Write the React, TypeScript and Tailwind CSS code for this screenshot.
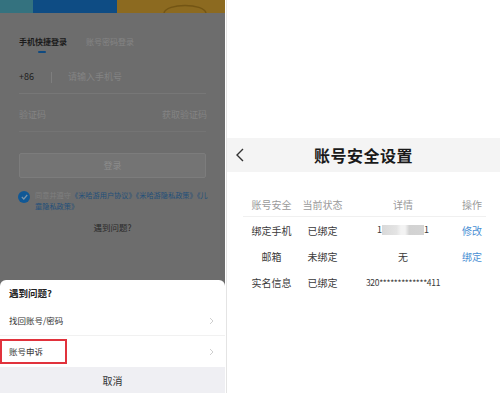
import React from "react";

const F = "font-['Noto_Sans_CJK_SC','Noto_Sans',sans-serif]";

function Chevron({ className }: { className?: string }) {
  return (
    <svg width="5" height="8" viewBox="0 0 5 8" className={className}>
      <path d="M1 1 L4 4 L1 7" fill="none" stroke="#cfcfcf" strokeWidth="1" />
    </svg>
  );
}

function LeftPanel() {
  return (
    <div className={`relative w-[225px] h-[393px] bg-[#6d6d6d] overflow-hidden ${F}`}>
      {/* banner */}
      <div className="flex h-[13px]">
        <div className="w-[33px] bg-[#34727f]" />
        <div className="w-[84px] bg-[#0e4c84]" />
        <div className="relative flex-1 bg-[#8c6a20]">
          <svg className="absolute left-[45px] top-0" width="46" height="13" viewBox="0 0 46 13">
            <path d="M2 13 C4 3 42 3 44 13" fill="none" stroke="#735514" strokeWidth="1.5" />
          </svg>
        </div>
      </div>

      <div className="px-[19px]">
        {/* tabs */}
        <div className="mt-[23px] flex items-center gap-[19px] h-[12px] text-[8px] leading-[12px]">
          <span className="text-[#1b1b1b] font-semibold">手机快捷登录</span>
          <span className="text-[#858585]">账号密码登录</span>
        </div>
        <div className="ml-[19px] mt-[3px] w-[8px] h-[2px] rounded bg-[#0f4a80]" />

        {/* phone */}
        <div className="mt-[18px] flex items-center h-[12px] text-[9px] leading-[12px]">
          <span className="text-[#1e1e1e] w-[32px]">+86</span>
          <span className="w-px h-[11px] bg-[#7e7e7e]" />
          <span className="ml-[16px] text-[#848484]">请输入手机号</span>
        </div>
        <div className="mt-[10px] h-px bg-[#777777]" />

        {/* code */}
        <div className="mt-[15px] flex items-center justify-between h-[12px] text-[9px] leading-[12px]">
          <span className="text-[#848484]">验证码</span>
          <span className="text-[#848484] mr-[-1px]">获取验证码</span>
        </div>
        <div className="mt-[10px] h-px bg-[#747474]" />

        {/* login button */}
        <div className="mt-[21px] h-[25px] rounded-[2px] bg-[#747474] border border-[#7c7c7c] flex items-center justify-center text-[9px] text-[#8d8d8d]">
          登录
        </div>

        {/* agreement */}
        <div className="mt-[12px] flex items-start gap-[5px] ml-[-1px]">
          <div className="mt-[1px] w-[12px] h-[12px] shrink-0 rounded-full bg-[#105896] flex items-center justify-center">
            <svg width="7" height="6" viewBox="0 0 7 6">
              <path d="M0.8 3 L2.8 5 L6.2 1" fill="none" stroke="#7c94a8" strokeWidth="1.2" />
            </svg>
          </div>
          <p className="text-[7.2px] leading-[11px] text-[#1f4f7a] whitespace-nowrap">
            <span className="text-[#7f7f7f]">同意并遵守</span>《米哈游用户协议》《米哈游隐私政策》《儿
            <br />
            童隐私政策》
          </p>
        </div>

        <div className="mt-[9px] text-center text-[8.5px] leading-[12px] text-[#2a2a2a]">遇到问题?</div>
      </div>

      {/* bottom sheet */}
      <div className="absolute left-0 right-0 top-[280px] bottom-0 bg-white rounded-t-[6px] flex flex-col">
        <div className="h-[26px] flex items-center pl-[9px] text-[9.5px] font-semibold text-[#222]">遇到问题?</div>
        <div className="h-[30px] flex items-center justify-between pl-[9px] pr-[11px] border-b border-[#f1f1f1] text-[8.5px] text-[#333]">
          <span>找回账号/密码</span>
          <Chevron />
        </div>
        <div className="relative h-[31px] flex items-center justify-between pl-[9px] pr-[11px] text-[8.5px] text-[#333]">
          <span>账号申诉</span>
          <Chevron />
          <div className="absolute left-0 top-[3px] w-[67px] h-[25px] border-2 border-[#e1323c]" />
        </div>
        <div className="flex-1 bg-[#efeff3] flex items-center justify-center text-[10px] text-[#333]">取消</div>
      </div>
    </div>
  );
}

const COLS = "grid grid-cols-[57px_45px_116px_22px]";

function RightPanel() {
  const cell = "flex items-center justify-center whitespace-nowrap";
  return (
    <div className={`flex-1 h-[393px] bg-white border-l border-[#e4e4e4] ml-px ${F}`}>
      <div className="mt-[138px] h-[34px] bg-[#f4f4f4] relative flex items-center justify-center">
        <svg className="absolute left-[8px] top-[10px]" width="10" height="14" viewBox="0 0 10 14">
          <path d="M8 1 L2 7 L8 13" fill="none" stroke="#333" strokeWidth="1.4" />
        </svg>
        <span className="text-[16px] font-bold text-[#1a1a1a] tracking-[0.5px]">账号安全设置</span>
      </div>

      <div className="mt-[21px] ml-[16px] w-[243px] text-[10px]">
        <div className={`${COLS} h-[24px] border-b border-[#f0f0f0] text-[#9a9a9a]`}>
          <div className={cell}>账号安全</div>
          <div className={cell}>当前状态</div>
          <div className={cell}>详情</div>
          <div className={cell}>操作</div>
        </div>
        <div className={`${COLS} h-[26px] text-[#3a3a3a]`}>
          <div className={cell}>绑定手机</div>
          <div className={cell}>已绑定</div>
          <div className={cell}>
            <span className="text-[9px]">1</span>
            <span className="w-[42px] h-[10px] bg-[linear-gradient(90deg,#d9d9d9_0%,#e4e4e4_35%,#f3f3f3_45%,#f3f3f3_55%,#d2d2d2_65%,#d4d4d4_100%)]" />
            <span className="text-[9px]">1</span>
          </div>
          <div className={`${cell} text-[#4a8fd4]`}>修改</div>
        </div>
        <div className={`${COLS} h-[26px] text-[#3a3a3a]`}>
          <div className={cell}>邮箱</div>
          <div className={cell}>未绑定</div>
          <div className={cell}>无</div>
          <div className={`${cell} text-[#4a8fd4]`}>绑定</div>
        </div>
        <div className={`${COLS} h-[27px] text-[#3a3a3a]`}>
          <div className={cell}>实名信息</div>
          <div className={cell}>已绑定</div>
          <div className={`${cell} text-[8.5px] tracking-[-0.3px]`}>320*************411</div>
          <div className={cell}></div>
        </div>
      </div>
    </div>
  );
}

export default function App() {
  return (
    <div className="w-[500px] h-[393px] flex bg-white overflow-hidden">
      <LeftPanel />
      <RightPanel />
    </div>
  );
}
